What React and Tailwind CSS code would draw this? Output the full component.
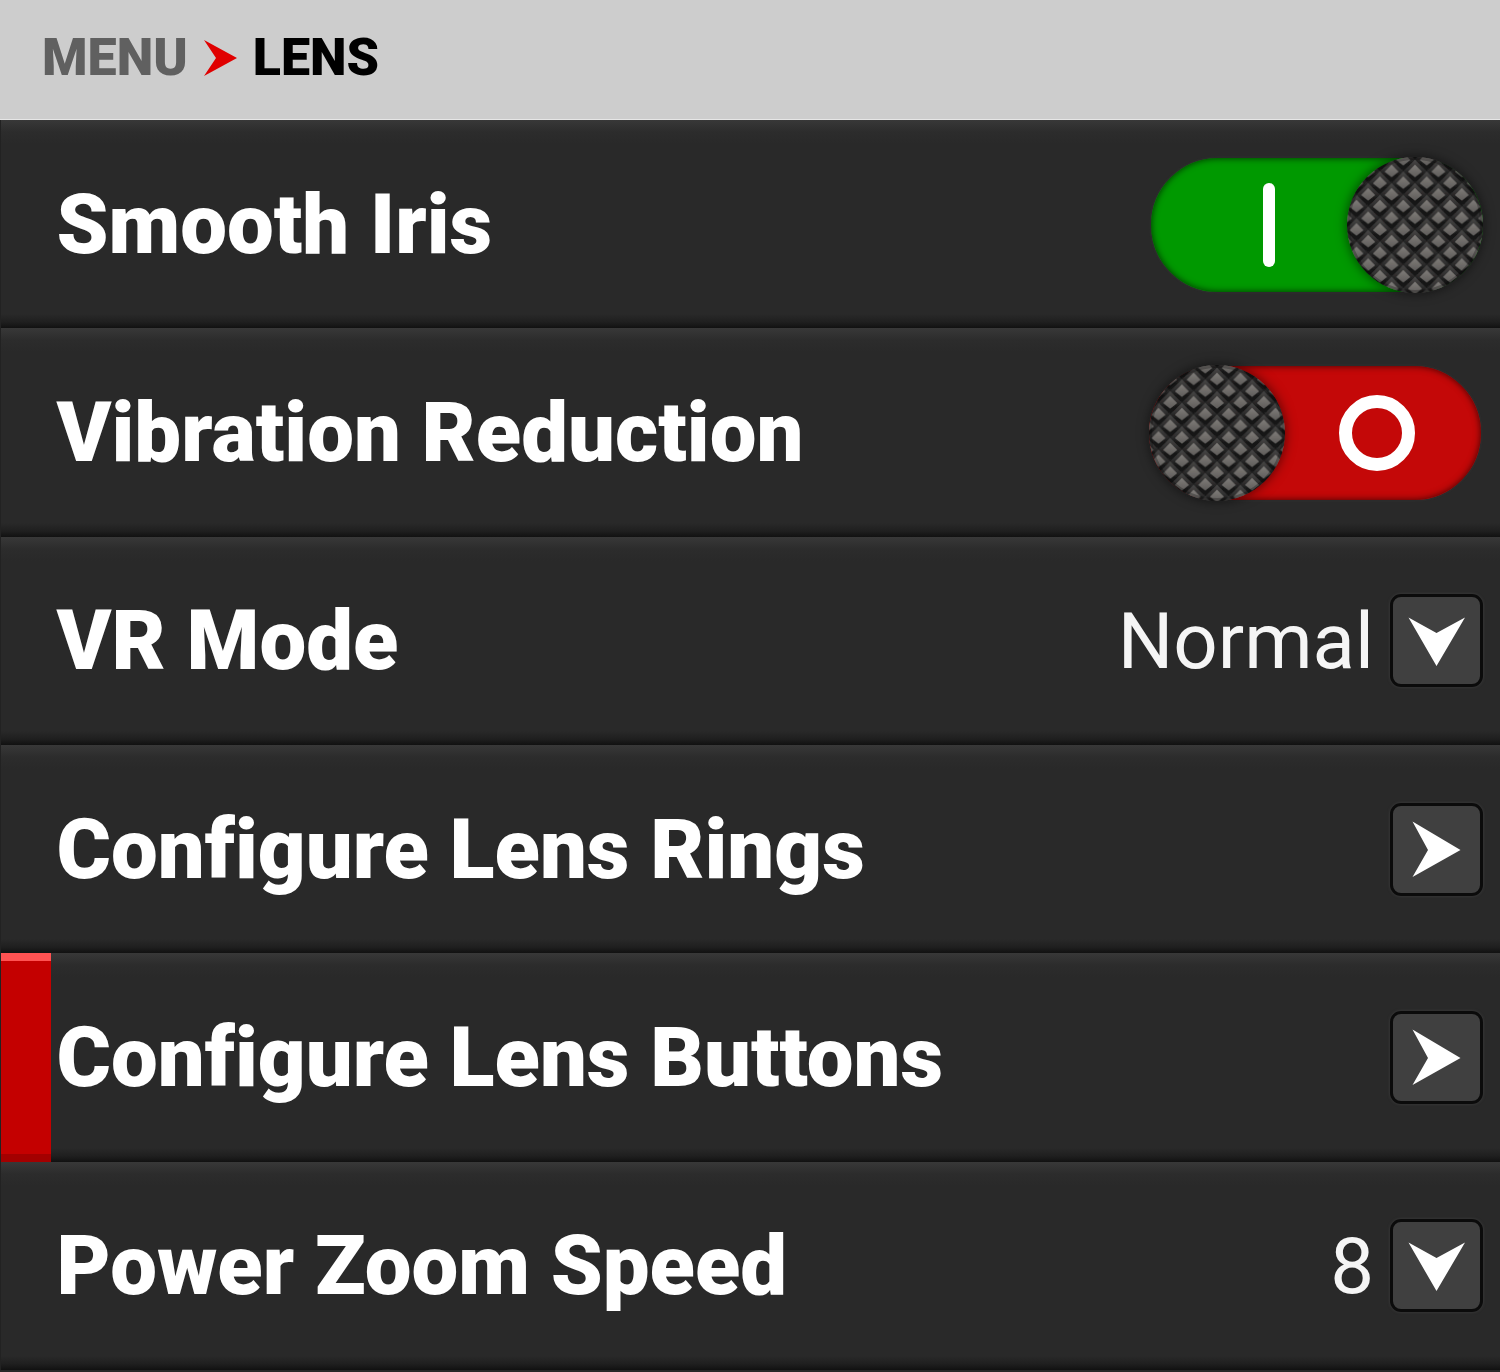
const rows = [
  { label: 'Smooth Iris', kind: 'on' },
  { label: 'Vibration Reduction', kind: 'off' },
  { label: 'VR Mode', kind: 'down', value: 'Normal' },
  { label: 'Configure Lens Rings', kind: 'right' },
  { label: 'Configure Lens Buttons', kind: 'right', active: true },
  { label: 'Power Zoom Speed', kind: 'down', value: '8' },
];

const DIAMONDS = [
  [0, -5.85],
  [23.4, -5.85],
  [11.7, 5.85],
  [0, 17.55],
  [23.4, 17.55],
  [11.7, 29.25],
];

// Textura de rombos del mando del interruptor.
function Knob({ id }) {
  return (
    <svg viewBox="0 0 136 136" className="w-[136px] h-[136px] rounded-full shadow-[0_0_12px_rgba(0,0,0,0.6)]">
      <defs>
        <linearGradient id={`${id}-a`} x1="0" y1="0" x2="0" y2="1">
          <stop offset="0" stopColor="#484746" />
          <stop offset="0.4" stopColor="#302f2f" />
          <stop offset="0.7" stopColor="#141414" />
          <stop offset="1" stopColor="#1c1c1c" />
        </linearGradient>
        <linearGradient id={`${id}-b`} x1="0" y1="0" x2="0" y2="1">
          <stop offset="0" stopColor="#7f7c78" />
          <stop offset="1" stopColor="#5e5c5a" />
        </linearGradient>
        <filter id={`${id}-soft`} x="-5%" y="-5%" width="110%" height="110%">
          <feGaussianBlur stdDeviation="0.7" />
        </filter>
        <pattern id={id} width="23.4" height="23.4" patternUnits="userSpaceOnUse" x="-2.2" y="-2.85">
          <rect width="23.4" height="23.4" fill="#232323" />
          {DIAMONDS.map(([x, y]) => (
            <path key={`${x}-${y}`} d={`M${x} ${y - 12} L${x + 12} ${y} L${x} ${y + 12} L${x - 12} ${y} Z`} fill={`url(#${id}-a)`} />
          ))}
          {DIAMONDS.map(([x, y]) => (
            <path key={`${x}-${y}`} d={`M${x} ${y - 7} L${x + 7} ${y} L${x} ${y + 5.5} L${x - 7} ${y} Z`} fill={`url(#${id}-b)`} />
          ))}
        </pattern>
      </defs>
      <rect width="136" height="136" fill={`url(#${id})`} filter={`url(#${id}-soft)`} />
      <circle cx="68" cy="68" r="66.5" fill="none" stroke="#000000" strokeOpacity="0.25" strokeWidth="3" />
    </svg>
  );
}

function Toggle({ on }) {
  if (on) {
    return (
      <div className="w-[336px] h-[138px] -mr-[2px] mt-[2px] rounded-full bg-[#009900] border-2 border-[#2b2b2b] shadow-[inset_0_0_7px_rgba(0,0,0,0.7)] flex items-center justify-end">
        <div className="flex-1 flex justify-center pl-[40px]">
          <div className="w-[12px] h-[84px] rounded-full bg-white" />
        </div>
        <Knob id="knob-on" />
      </div>
    );
  }
  return (
    <div className="w-[336px] h-[138px] mt-[2px] rounded-full bg-[#c40808] border-2 border-[#2b2b2b] shadow-[inset_0_0_7px_rgba(0,0,0,0.7)] flex items-center">
      <Knob id="knob-off" />
      <div className="flex-1 flex justify-center pr-[12px]">
        <div className="w-[76px] h-[76px] rounded-full border-[13px] border-white" />
      </div>
    </div>
  );
}

function ArrowButton({ dir }) {
  return (
    <div className="w-[93px] h-[93px] flex-shrink-0 rounded-[11px] border-[3px] border-[#0b0b0b] bg-[#404040] shadow-[0_0_3px_rgba(90,90,90,0.5)]">
      <svg viewBox="0 0 87 87" className="w-[87px] h-[87px]">
        {dir === 'down' ? (
          <path d="M15.5 20.5 L43.5 36 L72 20.5 L43.5 69 Z" fill="#ffffff" />
        ) : (
          <path d="M19.5 15.5 L35 44 L19.5 71 L67.5 44 Z" fill="#ffffff" />
        )}
      </svg>
    </div>
  );
}

function Row({ row }) {
  return (
    <div className="relative h-[208.33px] flex items-center justify-between pl-[55.5px] pr-[17px] border-l border-l-[#222222] bg-[linear-gradient(180deg,#383838_0px,#2c2c2c_12px,#292929_24px,#292929_calc(100%-14px),#1f1f1f_calc(100%-6px),#111111_100%)]">
      {row.active && (
        <div className="absolute left-0 top-0 bottom-0 w-[50px] bg-[#c40000] border-t-[8px] border-t-[#ff5252] border-b-[8px] border-b-[#a30000]" />
      )}
      <span className="relative font-['Roboto',sans-serif] font-black text-white text-[83.2px] leading-none whitespace-nowrap [font-variant-ligatures:none]">
        {row.label}
      </span>
      <div className="flex items-center gap-[16px]">
        {row.value && (
          <span className="pt-[2px] font-['Roboto',sans-serif] font-normal text-[#f5f5f5] text-[78px] leading-none">{row.value}</span>
        )}
        {row.kind === 'on' && <Toggle on />}
        {row.kind === 'off' && <Toggle />}
        {(row.kind === 'down' || row.kind === 'right') && <ArrowButton dir={row.kind} />}
      </div>
    </div>
  );
}

export default function App() {
  return (
    <div className="w-[1500px] h-[1372px] overflow-hidden bg-[#292929]">
      <div className="h-[120px] bg-[#cdcdcd] border-b border-b-[#e6e6e6] flex items-center pl-[42px] pb-[4px] gap-[16px] font-['Roboto',sans-serif] font-black text-[52px] leading-none">
        <span className="text-[#606060]">MENU</span>
        <svg viewBox="0 0 33 36" className="w-[33px] h-[36px]">
          <path d="M0 0 L12 18 L0 36 L33 18 Z" fill="#e00000" />
        </svg>
        <span className="text-black">LENS</span>
      </div>
      {rows.map((row) => (
        <Row key={row.label} row={row} />
      ))}
    </div>
  );
}
